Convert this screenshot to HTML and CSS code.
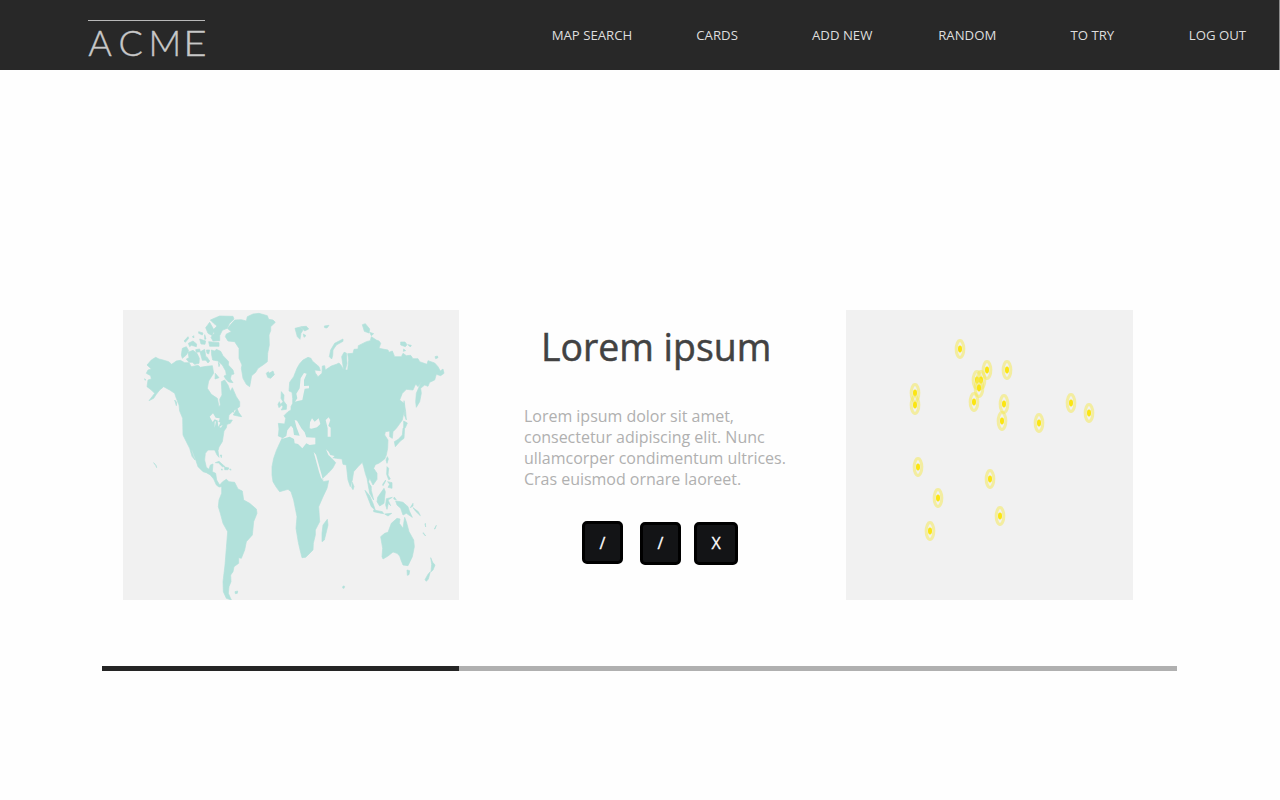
FILE: index.html
```html
<!DOCTYPE html>
<html lang="en">
<head>
<meta charset="utf-8">
<title>ACME</title>
<link rel="stylesheet" href="styles.css">
</head>
<body>
<header class="topbar">
  <svg class="logo" width="124" height="50" viewBox="0 0 124 50" role="img" aria-label="ACME">
    <rect class="logo-rule" x="0" y="1" width="117" height="1"/>
    <text class="logo-text" y="36.7" x="0.2 30.6 60.4">ACM</text>
    <text class="logo-text" transform="translate(95.2 36.7) scale(1.12 1)">E</text>
  </svg>
  <nav class="nav">
    <a>MAP SEARCH</a><a>CARDS</a><a>ADD NEW</a><a>RANDOM</a><a>TO TRY</a><a>LOG OUT</a>
  </nav>
</header>
<main class="stage">
  <section class="row">
    <svg class="panel world" width="336" height="290" viewBox="0 15 1008 870">
      <g class="land">
        <!-- Americas -->
        <path d="M98 157L108 162 120 165 137 170 146 178 160 168 172 166 185 173 198 173 205 185 225 181 232 187 250 184 268 182 272 205 257 228 253 250 265 268 283 280 288 305 292 300 290 283 297 270 295 230 305 225 315 240 322 259 328 248 340 275 350 290 350 305 335 315 318 330 316 345 328 345 322 355 312 358 310 368 303 378 298 410 288 426 285 437 288 457 282 450 275 435 255 435 247 445 245 465 250 487 258 493 262 480 270 477 268 500 278 505 281 525 290 540 299 530 310 523 318 530 335 532 345 552 358 558 362 585 380 595 400 612 402 625 392 650 388 690 370 710 365 735 355 760 347 758 347 775 333 785 330 800 323 810 324 830 318 845 316 865 325 885 310 880 301 860 300 830 306 780 310 730 314 680 300 655 292 625 286 605 288 585 296 565 296 545 288 546 280 540 272 522 262 510 250 503 240 500 225 485 220 470 208 437 205 435 212 455 216 465 207 454 200 430 190 410 180 390 179 340 170 318 168 300 160 280 155 265 140 255 122 245 110 255 100 268 92 280 78 287 95 265 85 255 72 245 75 225 85 222 83 212 70 205 75 195 85 192 72 180 85 165Z"/>
        <!-- Greenland and Iceland -->
        <path d="M373 35L390 27 408 25 433 32 437 43 450 45 457 52 443 65 443 77 438 90 439 120 434 145 433 170 420 180 405 190 398 202 386 212 380 245 370 238 360 220 355 190 357 180 348 160 348 130 335 110 315 108 307 95 310 87 325 80 313 70 335 45 355 44 370 48Z"/>
        <path d="M430 205L435 200 440 204 450 198 454 209 443 220 434 217Z"/>
        <!-- Arctic archipelago -->
        <path d="M262 45L290 33 330 34 333 42 320 55 312 70 298 76 290 92 290 107 270 108 264 97 274 85 270 75 282 63 272 55Z"/>
        <path d="M248 68L260 52 273 75 268 92 255 85Z"/>
        <path d="M183 108L195 95 197 100 187 112ZM196 115L210 108 221 117 220 125 205 121 200 125ZM227 80L240 84 238 90 227 85ZM245 89L249 102 245 103ZM208 96L212 92 213 98ZM230 102L248 108 246 118 234 117ZM257 110L288 113 288 124 260 124Z"/>
        <path d="M178 130L190 125 197 137 190 150 178 160 175 150ZM195 142L210 136 222 145 229 160 228 175 215 178 208 172 198 172 190 162 198 158ZM218 134L230 132 232 140 220 142ZM231 141L245 133 250 165 238 166ZM250 135L260 135 257 147 252 145ZM251 155L260 168 255 174 248 165Z"/>
        <path d="M265 135L275 138 280 133 293 139 300 152 317 170 316 180 330 195 333 207 325 209 322 222 330 233 317 231 308 222 303 213 310 210 308 198 298 180 285 168 269 165 266 150ZM277 205L288 218 276 222ZM286 172L290 178 288 185ZM331 330L342 310 347 322 356 335 344 333ZM155 285L161 292 160 302ZM65 221L68 225 66 226ZM327 318L331 317 332 322Z"/>
        <!-- Caribbean and Pacific islands -->
        <path d="M277 473L288 469 306 485 298 485 287 474ZM305 486L318 489 315 494 305 494ZM295 492L298 492 297 496ZM320 493L324 492 323 496ZM292 450L296 450 295 458ZM336 860L344 858 343 865 337 866ZM92 473L99 482 101 488 99 482ZM660 843L665 844 663 850 659 849Z"/>
        <!-- Europe, Asia and Africa -->
        <path d="M466 393L468 372 466 355 485 357 488 340 483 332 495 320 504 315 504 305 509 295 509 280 507 262 498 258 500 232 512 215 522 190 530 176 540 165 555 157 564 160 568 168 588 185 592 197 575 195 577 204 585 215 597 205 598 183 605 182 607 195 625 183 640 178 648 174 655 182 662 195 656 155 663 142 670 144 672 175 667 195 674 195 677 165 674 146 690 145 693 133 705 132 706 122 730 110 742 107 745 95 760 105 768 108 773 115 768 130 795 135 798 142 808 138 815 155 835 155 840 145 850 152 863 151 870 161 885 161 890 170 912 178 915 167 935 174 945 185 952 198 960 192 963 205 953 212 940 208 935 225 920 232 915 244 905 240 893 250 895 265 890 290 880 307 878 290 880 265 895 230 885 245 878 237 870 255 850 253 838 265 830 285 843 295 843 320 838 345 820 370 810 380 808 400 800 395 800 378 787 380 785 390 795 405 794 430 790 450 785 462 770 473 757 480 752 490 762 505 762 523 750 540 740 520 737 530 746 560 752 585 740 565 732 520 727 505 722 485 718 472 705 485 692 500 688 525 682 545 675 525 670 480 660 478 657 462 640 460 622 457 629 463 638 473 629 490 615 505 599 520 600 530 617 527 612 550 600 575 587 605 590 650 577 675 577 690 571 715 570 735 555 750 548 757 537 758 530 730 526 712 519 670 522 635 512 585 504 560 495 553 470 560 460 547 450 530 447 510 447 485 452 460 460 437 470 415 478 398Z"/>
        <path d="M475 260L483 270 482 288 491 300 490 313 475 315 480 305 473 298 480 290 474 280ZM469 290L474 302 468 308 465 298Z"/>
        <!-- Russian and Scandinavian islands -->
        <path d="M516 70L532 66 540 75 534 85 531 103 523 95ZM533 65L550 64 557 72 545 78ZM541 87L549 92 543 97ZM604 63L618 61 612 69 605 68ZM718 59L727 56 740 72 738 84 724 79ZM740 82L752 86 745 92ZM660 102L660 109 640 120 630 135 629 152 626 162 619 155 623 135 635 115ZM833 111L846 111 852 119 847 125 833 120ZM855 119L865 121 862 126ZM842 132L848 137 841 139ZM936 155L943 153 945 158 938 161Z"/>
        <!-- Japan, Sakhalin, Taiwan, Philippines -->
        <path d="M843 287L848 320 850 345 844 330ZM842 348L853 354 847 368 842 367ZM845 365L843 400 832 408 817 425 814 410 826 403 838 390 840 370ZM793 455L796 462 792 475 789 465ZM792 485L797 490 795 510 802 522 797 524 791 508ZM794 530L807 533 807 550 795 547 800 538ZM688 532L693 545 690 554 686 548ZM779 538L788 525 787 530 780 542Z"/>
        <!-- Indonesia, New Guinea -->
        <path d="M726 556L740 572 750 595 757 616 745 605ZM752 615L778 620 782 626 765 623 752 620ZM764 577L783 550 787 560 783 595 770 603 762 590ZM790 581L808 577 795 585 803 602 796 595 792 613 788 600ZM785 627L806 625 795 633ZM814 576L820 585 812 582ZM818 588L832 590 840 592 855 605 859 618 868 637 850 625 840 630 833 610 822 600ZM862 608L870 595 870 603ZM870 608L886 620 892 632 878 619ZM738 535L745 545 744 555Z"/>
        <!-- Madagascar, Australia, New Zealand -->
        <path d="M613 643L615 660 604 705 597 710 597 685 600 660Z"/>
        <path d="M822 640L831 642 829 655 840 670 845 637 850 650 858 680 872 705 874 725 868 755 855 782 840 780 834 765 830 753 822 745 810 741 795 753 780 762 777 755 779 730 773 695 785 685 795 682 805 655Z"/>
        <path d="M852 795L860 797 858 809 853 811ZM923 758L929 772 936 780 930 795 924 800 926 778ZM922 800L916 822 910 829 906 824 915 808ZM901 683L908 693 901 686ZM934 672L940 661 936 672ZM907 655L908 666 906 658Z"/>
      </g>
      <g class="sea">
        <path d="M476 402L490 393 493 376 504 362 510 370 513 390 530 392 520 365 515 345 522 347 535 370 545 382 550 397 577 398 577 418 560 420 550 415 538 430 525 417 515 415 513 402 500 395Z"/>
        <path d="M560 370L561 352 567 340 575 350 587 340 592 357 582 367 565 371ZM608 345L617 337 622 345 616 362 623 368 623 395 614 395 614 370ZM609 433L617 440 622 450 635 453 627 460 616 450ZM572 441L579 449 596 510 600 526 594 518 588 500Z"/>
        <path d="M516 290L523 280 520 266 530 250 533 220 543 204 551 206 543 225 543 243 558 242 558 250 545 251 541 270 538 285 527 287Z"/>
        <path d="M260 335L270 325 278 338 290 340 288 349 275 343 269 351ZM275 350L279 349 275 368ZM284 348L292 353 286 365ZM289 366L299 359 294 368ZM757 481L763 478 759 484Z"/>
      </g>
    </svg>
    <div class="copy">
      <h1>Lorem ipsum</h1>
      <p>Lorem ipsum dolor sit amet,<br>consectetur adipiscing elit. Nunc<br>ullamcorper condimentum ultrices.<br>Cras euismod ornare laoreet.</p>
      <div class="keys">
        <button>/</button><button class="second">/</button><button class="close">X</button>
      </div>
    </div>
    <svg class="panel pins" width="286.5" height="290" viewBox="846 310 286.5 290">
      <defs>
        <g id="pin">
          <ellipse class="ring" rx="3.8" ry="8.4"/>
          <ellipse class="core" rx="2" ry="3.4"/>
        </g>
      </defs>
      <use href="#pin" x="960" y="349"/><use href="#pin" x="987" y="370"/>
      <use href="#pin" x="1007" y="370"/><use href="#pin" x="977" y="380"/>
      <use href="#pin" x="981" y="380"/><use href="#pin" x="979" y="388"/>
      <use href="#pin" x="974" y="402"/><use href="#pin" x="915" y="393"/>
      <use href="#pin" x="915" y="405"/><use href="#pin" x="1004" y="404"/>
      <use href="#pin" x="1002" y="421"/><use href="#pin" x="1039" y="423"/>
      <use href="#pin" x="1071" y="403"/><use href="#pin" x="1089" y="413"/>
      <use href="#pin" x="918" y="467"/><use href="#pin" x="938" y="498"/>
      <use href="#pin" x="930" y="531"/><use href="#pin" x="990" y="479"/>
      <use href="#pin" x="1000" y="516"/>
    </svg>
  </section>
  <div class="progress"><div class="progress-fill"></div></div>
</main>
</body>
</html>
```
FILE: styles.css
```css
* { box-sizing: border-box; }
body {
  margin: 0;
  height: 800px;
  background: #fefefe;
  font-family: "Open Sans", "Noto Sans", sans-serif;
  overflow: hidden;
}
.topbar {
  display: flex;
  justify-content: space-between;
  height: 70px;
  padding: 19px 0 0 88px;
  border-right: 1px solid #8c8c8c;
  background: #282828;
}
.logo { display: block; overflow: visible; }
.logo-rule { fill: #b8b8b8; }
.logo-text {
  font: 300 36px Lato, sans-serif;
  fill: #c8c8c8;
  stroke: #c8c8c8;
  stroke-width: 0.4px;
}
.nav {
  display: grid;
  grid-template-columns: repeat(6, 125.1px);
  margin-right: -1px;
  height: 32px;
  line-height: 32px;
  text-align: center;
  font-size: 13.2px;
  color: #dedede;
}
.nav a { white-space: nowrap; }
.stage { padding: 240px 103px 0 102px; }
.row {
  display: flex;
  padding-left: 21px;
  height: 290px;
}
.panel {
  display: block;
  flex: none;
  background: #f1f1f1;
}
.land {
  fill: #b2e1db;
  stroke: #b2e1db;
  stroke-width: 2;
  stroke-linejoin: round;
}
.sea { fill: #f1f1f1; }
.copy {
  flex: none;
  width: 387px;
  padding: 10.5px 0 0 65px;
}
h1 {
  margin: 0 0 0 17px;
  font-size: 37.4px;
  font-weight: 400;
  line-height: 52px;
  color: #424242;
  -webkit-text-stroke: 0.5px #424242;
}
p {
  margin: 33.5px 0 0;
  font-size: 16px;
  line-height: 21px;
  letter-spacing: -0.02px;
  color: #b0b0b0;
  white-space: nowrap;
}
.keys {
  display: flex;
  padding: 31px 0 0 58px;
}
button {
  width: 41px;
  height: 43px;
  padding: 0;
  border: 3px solid #000;
  border-radius: 5px;
  background: #131416;
  color: #fff;
  font: 16px "Open Sans", sans-serif;
  -webkit-text-stroke: 0.3px #fff;
}
.second { margin-left: 17px; margin-top: 0.5px; }
.close { width: 44px; margin-left: 13px; margin-top: 0.5px; }
.ring {
  fill: none;
  stroke: #f5e94f;
  stroke-opacity: 0.5;
  stroke-width: 3;
}
.core { fill: #fbe511; }
.progress {
  margin-top: 66px;
  height: 5px;
  background: #b0b0b0;
}
.progress-fill {
  width: 357px;
  height: 5px;
  background: #252525;
}
```
